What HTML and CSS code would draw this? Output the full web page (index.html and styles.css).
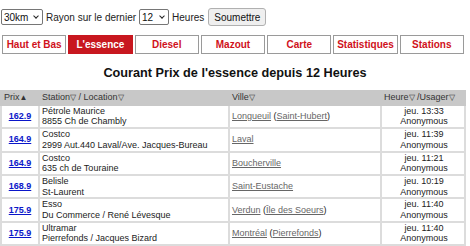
FILE: index.html
```html
<!DOCTYPE html>
<html lang="fr">
<head>
<meta charset="UTF-8">
<title>Prix de l'essence</title>
<link rel="stylesheet" href="styles.css">
</head>
<body>
    <form class="filtre">
        <span class="liste"><select class="choix rayon"><option>30km</option></select></span>
        <span>Rayon sur le dernier</span>
        <span class="liste"><select class="choix heures"><option>12</option></select></span>
        <span>Heures</span>
        <button type="button" class="soumettre">Soumettre</button>
    </form>
    <div class="menu">
        <a href="#" class="onglet">Haut et Bas</a>
        <a href="#" class="onglet actif">L'essence</a>
        <a href="#" class="onglet">Diesel</a>
        <a href="#" class="onglet">Mazout</a>
        <a href="#" class="onglet">Carte</a>
        <a href="#" class="onglet">Statistiques</a>
        <a href="#" class="onglet">Stations</a>
    </div>
    <h1 class="titre">Courant Prix de l'essence depuis 12 Heures</h1>
    <table class="prix">
        <tr class="entete">
            <th class="c-prix">Prix<span class="tri">&#9650;</span></th>
            <th class="c-station">Station<span class="tri">&#9661;</span> / Location<span class="tri">&#9661;</span></th>
            <th class="c-ville">Ville<span class="tri">&#9661;</span></th>
            <th class="c-heure">Heure<span class="tri">&#9661;</span> /Usager<span class="tri">&#9661;</span></th>
        </tr>
        <tr>
            <td class="c-prix"><a href="#">162.9</a></td>
            <td>Pétrole Maurice<br>8855 Ch de Chambly</td>
            <td><a href="#" class="lien">Longueuil</a> (<a href="#" class="lien">Saint-Hubert</a>)</td>
            <td class="c-heure">jeu. 13:33<br>Anonymous</td>
        </tr>
        <tr>
            <td class="c-prix"><a href="#">164.9</a></td>
            <td>Costco<br>2999 Aut.440 Laval/Ave. Jacques-Bureau</td>
            <td><a href="#" class="lien">Laval</a></td>
            <td class="c-heure">jeu. 11:39<br>Anonymous</td>
        </tr>
        <tr>
            <td class="c-prix"><a href="#">164.9</a></td>
            <td>Costco<br>635 ch de Touraine</td>
            <td><a href="#" class="lien">Boucherville</a></td>
            <td class="c-heure">jeu. 11:21<br>Anonymous</td>
        </tr>
        <tr>
            <td class="c-prix"><a href="#">168.9</a></td>
            <td>Belisle<br>St-Laurent</td>
            <td><a href="#" class="lien">Saint-Eustache</a></td>
            <td class="c-heure">jeu. 10:19<br>Anonymous</td>
        </tr>
        <tr>
            <td class="c-prix"><a href="#">175.9</a></td>
            <td>Esso<br>Du Commerce / René Lévesque</td>
            <td><a href="#" class="lien">Verdun</a> (<a href="#" class="lien">Île des Soeurs</a>)</td>
            <td class="c-heure">jeu. 11:40<br>Anonymous</td>
        </tr>
        <tr>
            <td class="c-prix"><a href="#">175.9</a></td>
            <td>Ultramar<br>Pierrefonds / Jacques Bizard</td>
            <td><a href="#" class="lien">Montréal</a> (<a href="#" class="lien">Pierrefonds</a>)</td>
            <td class="c-heure">jeu. 11:40<br>Anonymous</td>
        </tr>
    </table>
</body>
</html>
```

FILE: styles.css
```css
body {
    margin: 0;
    font-family: "Liberation Sans", Arial, sans-serif;
    font-size: 10px;
    color: #222;
}
.filtre {
    display: flex;
    align-items: center;
    gap: 3px;
    padding: 8px 0 0 1px;
    margin: 0;
}
.liste {
    position: relative;
    display: flex;
}
.liste::after {
    content: "";
    position: absolute;
    right: 5px;
    top: 5px;
    width: 3px;
    height: 3px;
    border-right: 1.3px solid #222;
    border-bottom: 1.3px solid #222;
    transform: rotate(45deg);
    pointer-events: none;
}
.choix {
    -webkit-appearance: none;
    appearance: none;
    font-family: "Liberation Sans", Arial, sans-serif;
    font-size: 10px;
    height: 16px;
    padding: 0 0 0 2px;
    border: 1px solid #767676;
    border-radius: 2px;
    background: #fff;
    color: #111;
}
.rayon {
    width: 42px;
}
.heures {
    width: 30px;
}
.soumettre {
    font-family: "Liberation Sans", Arial, sans-serif;
    font-size: 10px;
    height: 18px;
    padding: 0 5px;
    margin-left: 1px;
    border: 1px solid #b0b0b0;
    border-radius: 3px;
    background: #efefef;
    color: #111;
}
.menu {
    display: flex;
    gap: 2px;
    padding: 0 2px;
    margin-top: 9px;
    width: 462px;
    box-sizing: content-box;
}
.onglet {
    flex: 1;
    height: 17px;
    line-height: 17px;
    text-align: center;
    border: 1px solid #9a9a9a;
    color: #d0111b;
    font-weight: bold;
    font-size: 10px;
    text-decoration: none;
    background: #fff;
}
.actif {
    background: #c8171f;
    color: #fff;
    border-color: #c8171f;
}
.titre {
    font-size: 12.7px;
    text-align: center;
    margin: 12px 0 10px;
    color: #111;
}
.prix {
    width: 466px;
    border-collapse: collapse;
    font-size: 9px;
    line-height: 10.7px;
}
.prix td, .prix th {
    border: 2px solid #dcdcdc;
    padding: 0 0 0 2px;
    text-align: left;
    vertical-align: middle;
    color: #222;
}
.entete th {
    background: #c8c8c8;
    font-weight: normal;
    color: #333;
    height: 9px;
    border-color: #c8c8c8;
}
.tri {
    font-size: 8px;
}
.c-prix {
    width: 34px;
}
.prix td.c-prix {
    text-align: center;
    padding: 0;
}
.c-prix a {
    color: #0a16c9;
    font-weight: bold;
}
.c-station {
    width: 186px;
}
.c-ville {
    width: 148px;
}
.prix td.c-heure {
    text-align: center;
}
.lien {
    color: #666;
}
```
